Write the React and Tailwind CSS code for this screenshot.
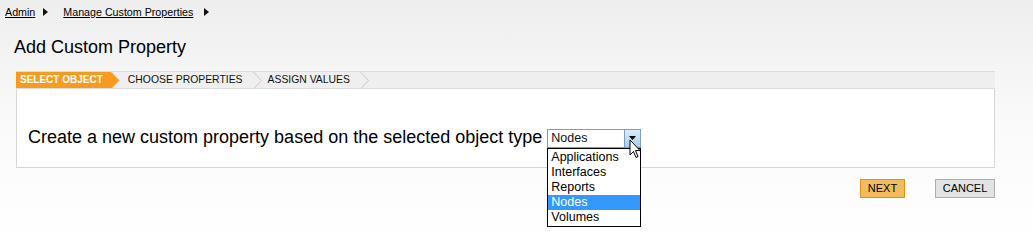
import React from "react";

const Tri = ({ className }) => (
  <svg width="5" height="8" viewBox="0 0 5 8" className={className}>
    <path d="M0 0 L5 4 L0 8 Z" fill="#111" />
  </svg>
);

const Chevron = ({ fill }) => (
  <svg width="10" height="17" viewBox="0 0 10 17" className="shrink-0">
    {fill && <path d="M0 0 L1 0 L9 8.5 L1 17 L0 17 Z" fill={fill} />}
    <path d="M1.5 0 L9.5 8.5 L1.5 17" fill="none" stroke="#c9c9c9" strokeWidth="1" />
  </svg>
);

const items = ["Applications", "Interfaces", "Reports", "Nodes", "Volumes"];

export default function App() {
  return (
    <div
      className="relative w-[1033px] h-[243px] overflow-hidden bg-gradient-to-b from-[#eeeeee] via-[#fafafa] to-white text-[#111]"
      style={{ fontFamily: '"Liberation Sans", Arial, sans-serif' }}
    >
      {/* breadcrumb */}
      <div className="flex items-center pl-[5px] pt-[4px] h-[20px] text-[10.7px]">
        <a className="underline text-black">Admin</a>
        <Tri className="ml-[8px] mr-[15px]" />
        <a className="underline text-black">Manage Custom Properties</a>
        <Tri className="ml-[11px]" />
      </div>

      <h1 className="pl-[14px] mt-[17px] text-[18px] leading-[21px] text-black">Add Custom Property</h1>

      {/* wizard */}
      <div className="mt-[13px] mx-[16px] w-[979px]">
        <div className="flex items-center h-[17px] bg-[#efefef] border-t border-[#dcdcdc] text-[10.4px] leading-none">
          <div className="flex items-center h-full">
            <span className="bg-[#f79b1e] text-white font-bold text-[10px] h-full flex items-center pl-[4px] pr-[7px]">
              SELECT OBJECT
            </span>
            <Chevron fill="#f79b1e" />
          </div>
          <span className="pl-[8px] pr-[9px] text-[#111]">CHOOSE PROPERTIES</span>
          <Chevron />
          <span className="pl-[6px] pr-[9px] text-[#111]">ASSIGN VALUES</span>
          <Chevron />
        </div>
        <div className="relative h-[80px] bg-white border border-[#d6d6d6] border-t-[#dcdcdc] flex items-center pl-[11px] pt-[18px]">
          <span className="text-[18px] text-black">Create a new custom property based on the selected object type</span>
          <div className="relative ml-[5px] mt-[2px]">
            <div className="flex items-center w-[94px] h-[19px] border border-[#7f9db9] bg-white">
              <span className="flex-1 pl-[3px] text-[12.5px] leading-none">Nodes</span>
              <span className="w-[16px] h-[17px] flex items-center justify-center bg-gradient-to-b from-[#d9ecfb] to-[#a9cdef] border-l border-[#7f9db9]">
                <svg width="7" height="4" viewBox="0 0 7 4"><path d="M0 0 L7 0 L3.5 4 Z" fill="#000" /></svg>
              </span>
            </div>
            <ul className="absolute left-0 top-[19px] w-[94px] bg-white border border-[#000] z-10 text-[12.5px] leading-[15px] py-[1px]">
              {items.map((it) => (
                <li key={it} className={it === "Nodes" ? "bg-[#3399ff] text-white pl-[3px]" : "pl-[3px] text-black"}>
                  {it}
                </li>
              ))}
            </ul>
            <svg className="absolute left-[82px] top-[10px] z-20" width="13" height="20" viewBox="0 0 13 20">
              <path d="M1 1 L1 16 L4.5 12.5 L7 18.5 L9 17.5 L6.5 11.5 L11 11.5 Z" fill="#fff" stroke="#000" strokeWidth="1" strokeLinejoin="round" />
            </svg>
          </div>
        </div>
      </div>

      {/* buttons */}
      <div className="flex justify-end gap-[30px] pr-[38px] mt-[11px] text-[11px]">
        <button className="w-[45px] h-[19px] bg-[#f2bc5c] border border-[#e0921d] text-black">NEXT</button>
        <button className="w-[60px] h-[19px] bg-[#e3e3e3] border border-[#adadad] text-black">CANCEL</button>
      </div>
    </div>
  );
}
